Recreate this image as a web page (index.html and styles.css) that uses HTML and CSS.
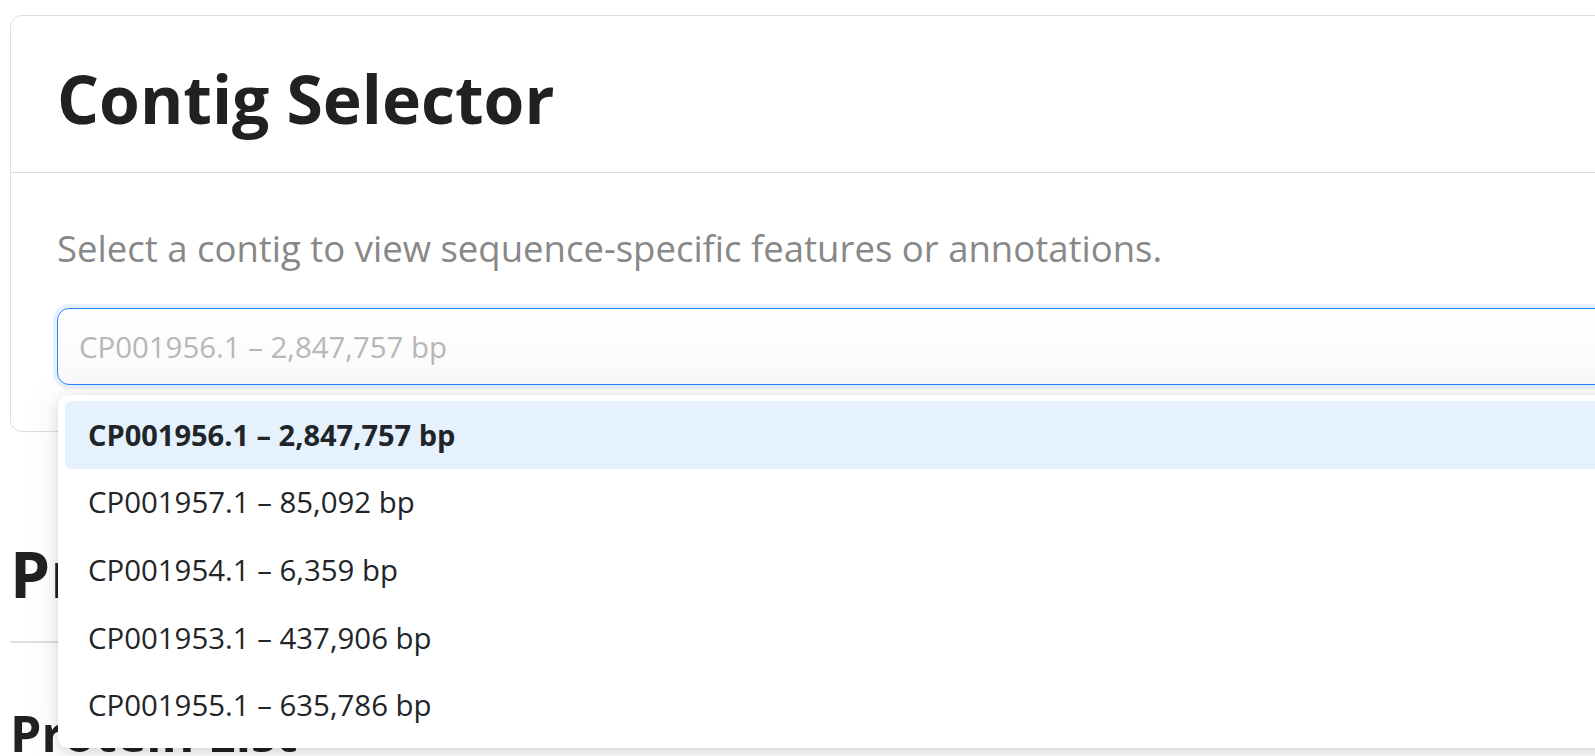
FILE: index.html
```html
<!DOCTYPE html>
<html lang="en">
<head>
<meta charset="utf-8">
<title>Contig Selector</title>
<link rel="stylesheet" href="styles.css">
</head>
<body>
<div class="page">
  <section class="card">
    <header class="card-header">
      <h1 class="card-title">Contig Selector</h1>
    </header>
    <div class="card-body">
      <p class="lead">Select a contig to view sequence-specific features or annotations.</p>
      <div class="select">
        <div class="select-control">
          <span class="placeholder">CP001956.1 – 2,847,757 bp</span>
        </div>
        <ul class="menu">
          <li class="option focused">CP001956.1 – 2,847,757 bp</li>
          <li class="option">CP001957.1 – 85,092 bp</li>
          <li class="option">CP001954.1 – 6,359 bp</li>
          <li class="option">CP001953.1 – 437,906 bp</li>
          <li class="option">CP001955.1 – 635,786 bp</li>
        </ul>
      </div>
    </div>
  </section>
  <h2 class="section-title">Proteins</h2>
  <hr class="rule">
  <h3 class="sub-title">Protein List</h3>
</div>
</body>
</html>
```
FILE: styles.css
```css
html, body {
  margin: 0;
  padding: 0;
  overflow: hidden;
  background: #ffffff;
}

body {
  font-family: "Open Sans", "Noto Sans", sans-serif;
  color: #212121;
}

.page {
  width: 1800px;
  padding: 15px 0 0 10px;
}

.card {
  border: 1px solid #dedede;
  border-radius: 12px;
  background: #fff;
}

.card-header {
  border-bottom: 1px solid #dedede;
  padding: 9px 46px 0;
}

.card-title {
  margin: 0;
  font-size: 66px;
  line-height: 147px;
  font-weight: 700;
  color: #212121;
}

.card-body {
  padding: 52px 46px 46px;
}

.lead {
  margin: 0 0 37px;
  font-size: 36.5px;
  line-height: 46px;
  color: #888888;
}

.select {
  position: relative;
}

.select-control {
  height: 77px;
  box-sizing: border-box;
  border: 1px solid #2684ff;
  border-radius: 12px;
  box-shadow: 0 0 0 4px rgba(38, 132, 255, 0.11);
  background: linear-gradient(#ffffff, #fafafa);
  display: flex;
  align-items: center;
  padding: 0 21px;
}

.placeholder {
  font-size: 29.4px;
  color: #b9b6b6;
}

.menu {
  position: absolute;
  top: calc(100% + 10px);
  left: 1px;
  right: 0;
  margin: 0;
  padding: 6px 7px 9px;
  list-style: none;
  background: #fff;
  border-radius: 10px;
  box-shadow: 0 4px 12px rgba(0, 0, 0, 0.12), 0 0 40px rgba(0, 0, 0, 0.08);
  z-index: 10;
}

.option {
  height: 67.6px;
  display: flex;
  align-items: center;
  padding: 0 23px;
  font-size: 29.4px;
  color: #212529;
  border-radius: 6px;
}

.option.focused {
  background: #e5f2fd;
  font-weight: 700;
  font-size: 29px;
}

.section-title {
  margin: 102px 0 27px;
  font-size: 64px;
  line-height: 80px;
  font-weight: 700;
  color: #212121;
}

.rule {
  margin: 0;
  border: 0;
  border-top: 2px solid #dddddd;
}

.sub-title {
  margin: 60px 0 0;
  font-size: 50px;
  line-height: 60px;
  font-weight: 700;
  color: #212121;
}
```
